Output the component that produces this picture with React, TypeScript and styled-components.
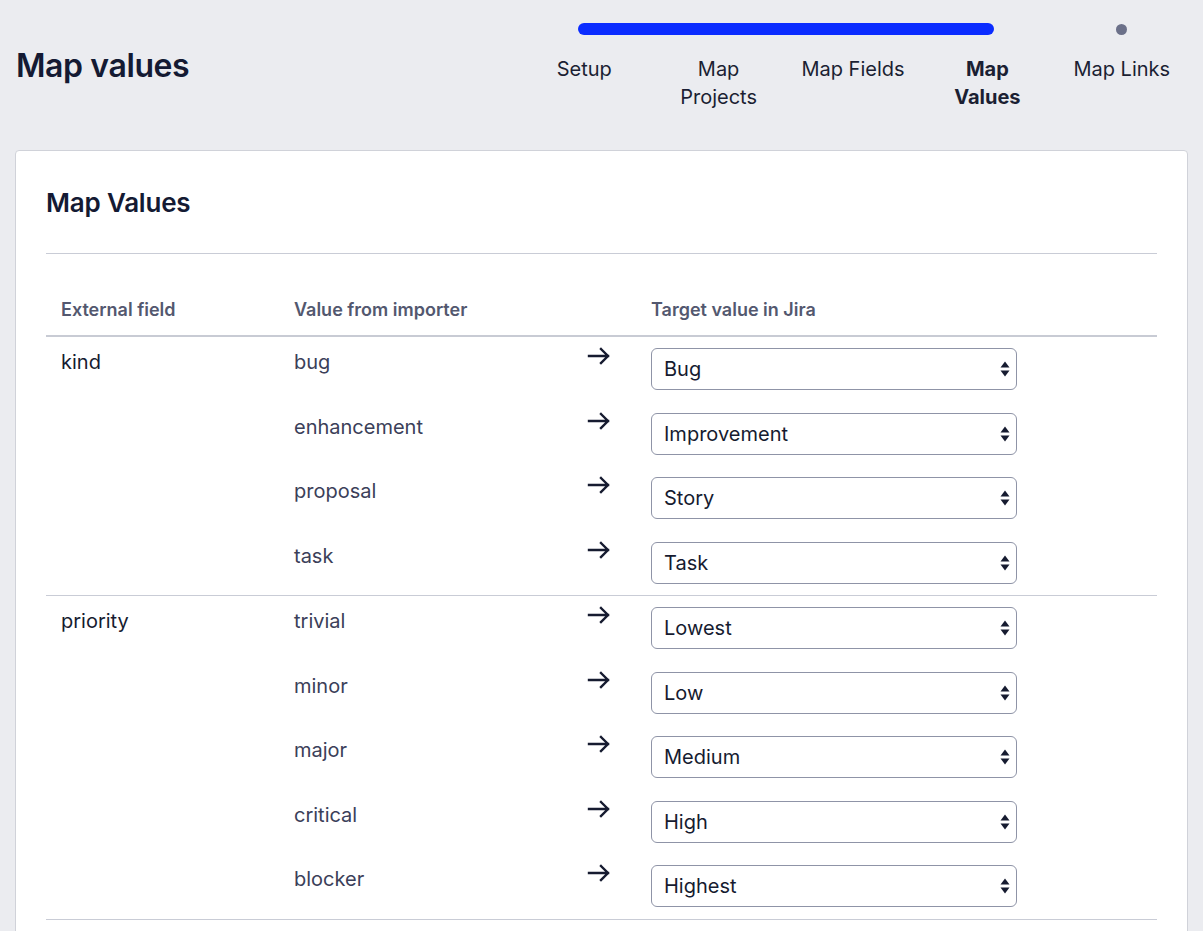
import React from "react";
import styled, { createGlobalStyle } from "styled-components";

const GlobalStyle = createGlobalStyle`
  html, body {
    margin: 0;
    padding: 0;
    background: #ebecf0;
    font-family: Inter, "Noto Sans", "Liberation Sans", sans-serif;
    color: #172033;
  }
  * { box-sizing: border-box; }
`;

const Page = styled.div`
  min-height: 931px;
  overflow: hidden;
`;

const Header = styled.header`
  display: flex;
  justify-content: space-between;
  align-items: flex-start;
  padding: 0 14px 0 16px;
`;

const Title = styled.h1`
  margin: 46px 0 0;
  font-size: 32px;
  line-height: 40px;
  font-weight: 600;
  letter-spacing: -0.4px;
  color: #141a33;
`;

const Stepper = styled.nav`
  width: 672px;
  padding-top: 23px;
`;

const Track = styled.div`
  display: grid;
  grid-template-columns: repeat(5, 1fr);
  align-items: center;
  height: 12px;
`;

const Progress = styled.div<{ $from: number; $to: number }>`
  grid-column: ${(p) => p.$from} / ${(p) => p.$to};
  margin: 0 61px;
  height: 12px;
  border-radius: 6px;
  background: #0b2cff;
`;

const Dot = styled.span<{ $col: number }>`
  grid-column: ${(p) => p.$col};
  justify-self: center;
  width: 11px;
  height: 11px;
  border-radius: 50%;
  background: #6b7089;
`;

const Labels = styled.ol`
  display: grid;
  grid-template-columns: repeat(5, 1fr);
  margin: 20px 0 0;
  padding: 0;
  list-style: none;
`;

const StepLabel = styled.li<{ $current?: boolean }>`
  justify-self: center;
  max-width: 110px;
  text-align: center;
  font-size: 20px;
  line-height: 28px;
  font-weight: ${(p) => (p.$current ? 700 : 400)};
  color: #1b1f33;
`;

const Card = styled.section`
  margin: 39px 15px 0;
  background: #ffffff;
  border: 1px solid #d0d2d9;
  border-radius: 4px;
  padding: 36px 30px 40px;
`;

const CardTitle = styled.h2`
  margin: 0;
  font-size: 26px;
  line-height: 32px;
  font-weight: 600;
  color: #141a33;
  letter-spacing: -0.2px;
`;

const Rule = styled.hr`
  margin: 34px 0 0;
  border: none;
  border-top: 1px solid #c9ccd6;
`;

const HeadRow = styled.div`
  display: grid;
  grid-template-columns: 233px 293px 64px 1fr;
  padding: 44px 0 13px;
  border-bottom: 2px solid #c8cbd4;
`;

const HeadCell = styled.div`
  padding-left: 15px;
  font-size: 18px;
  line-height: 24px;
  font-weight: 600;
  color: #53586f;
`;

const Group = styled.div`
  display: flex;
  border-bottom: 1px solid #c9ccd6;
`;

const FieldCell = styled.div`
  width: 233px;
  flex-shrink: 0;
  padding: 11.25px 15px;
  font-size: 20px;
  line-height: 28px;
  color: #161b30;
`;

const Rows = styled.div`
  flex: 1;
`;

const Row = styled.div`
  display: grid;
  grid-template-columns: 293px 64px 1fr;
  align-items: start;
  padding: 11.25px 0;
`;

const ValueText = styled.div`
  padding-left: 15px;
  font-size: 20px;
  line-height: 28px;
  color: #3b4059;
`;

const ArrowCell = styled.div`
  padding-left: 15px;
  margin-top: -4px;
  height: 24px;
  color: #161b30;
`;

const TargetCell = styled.div`
  padding-left: 15px;
`;

const SelectWrap = styled.div`
  position: relative;
  width: 366px;
`;

const Select = styled.select`
  appearance: none;
  -webkit-appearance: none;
  width: 100%;
  height: 42px;
  padding: 0 36px 0 12px;
  border: 1px solid #8f94a7;
  border-radius: 6px;
  background: #ffffff;
  font-family: inherit;
  font-size: 20px;
  color: #161b30;
  outline: none;
`;

const Chevrons = styled.svg`
  position: absolute;
  right: 6px;
  top: 12px;
  pointer-events: none;
`;

const Arrow = () => (
  <svg width="25" height="24" viewBox="0 0 25 24" fill="none">
    <path
      d="M2 12h19M14 5l7 7-7 7"
      stroke="currentColor"
      strokeWidth="2.4"
      strokeLinecap="square"
      strokeLinejoin="miter"
    />
  </svg>
);

type Mapping = { from: string; to: string };

const groups: { field: string; mappings: Mapping[] }[] = [
  {
    field: "kind",
    mappings: [
      { from: "bug", to: "Bug" },
      { from: "enhancement", to: "Improvement" },
      { from: "proposal", to: "Story" },
      { from: "task", to: "Task" },
    ],
  },
  {
    field: "priority",
    mappings: [
      { from: "trivial", to: "Lowest" },
      { from: "minor", to: "Low" },
      { from: "major", to: "Medium" },
      { from: "critical", to: "High" },
      { from: "blocker", to: "Highest" },
    ],
  },
];

const steps = ["Setup", "Map Projects", "Map Fields", "Map Values", "Map Links"];
const current = 3;

export default function App() {
  return (
    <Page>
      <GlobalStyle />
      <Header>
        <Title>Map values</Title>
        <Stepper>
          <Track>
            <Progress $from={1} $to={current + 2} />
            <Dot $col={5} />
          </Track>
          <Labels>
            {steps.map((s, i) => (
              <StepLabel key={s} $current={i === current}>
                {s}
              </StepLabel>
            ))}
          </Labels>
        </Stepper>
      </Header>
      <Card>
        <CardTitle>Map Values</CardTitle>
        <Rule />
        <HeadRow>
          <HeadCell>External field</HeadCell>
          <HeadCell>Value from importer</HeadCell>
          <HeadCell />
          <HeadCell>Target value in Jira</HeadCell>
        </HeadRow>
        {groups.map((g) => (
          <Group key={g.field}>
            <FieldCell>{g.field}</FieldCell>
            <Rows>
              {g.mappings.map((m) => (
                <Row key={m.from}>
                  <ValueText>{m.from}</ValueText>
                  <ArrowCell>
                    <Arrow />
                  </ArrowCell>
                  <TargetCell>
                    <SelectWrap>
                      <Select defaultValue={m.to}>
                        <option>{m.to}</option>
                      </Select>
                      <Chevrons width="12" height="18" viewBox="0 0 12 18">
                        <path d="M6 1.5L10.5 7.5H1.5Z" fill="#161b30" />
                        <path d="M6 16.5L10.5 10.5H1.5Z" fill="#161b30" />
                      </Chevrons>
                    </SelectWrap>
                  </TargetCell>
                </Row>
              ))}
            </Rows>
          </Group>
        ))}
      </Card>
    </Page>
  );
}
